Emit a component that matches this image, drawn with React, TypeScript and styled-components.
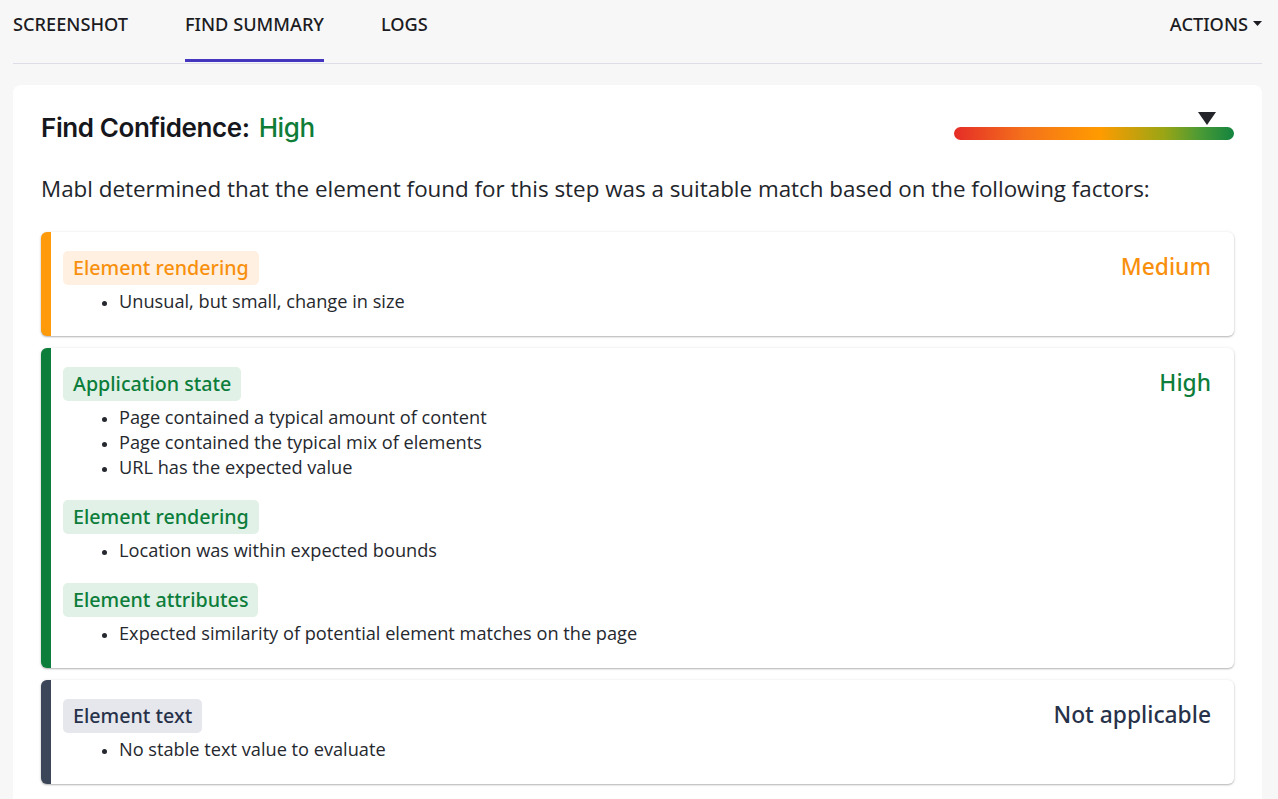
import React from "react";
import styled, { createGlobalStyle } from "styled-components";

const Global = createGlobalStyle`
  html, body { margin: 0; padding: 0; background: #f7f7f8; }
  body { font-family: "Open Sans", "Noto Sans", sans-serif; color: #1f2430; }
  * { box-sizing: border-box; }
`;

const Page = styled.div`
  padding: 0 16px 0 13px;
  min-height: 799px;
  overflow: hidden;
`;

const TabBar = styled.div`
  display: flex;
  align-items: stretch;
  height: 64px;
  border-bottom: 1px solid #dedee8;
`;

const Tabs = styled.div`
  display: flex;
  gap: 57px;
  flex: 1;
`;

const Tab = styled.div<{ $active?: boolean }>`
  font-family: "Noto Sans", "Open Sans", sans-serif;
  font-size: 18.2px;
  font-weight: 500;
  color: #1c1c22;
  padding-top: 12px;
  line-height: 24px;
  border-bottom: 3px solid ${(p) => (p.$active ? "#4536c0" : "transparent")};
  margin-bottom: 1px;
  height: 62px;
`;

const Actions = styled.div`
  display: flex;
  align-items: flex-start;
  gap: 5px;
  padding-top: 12px;
  line-height: 24px;
  font-family: "Noto Sans", "Open Sans", sans-serif;
  font-size: 18.2px;
  font-weight: 500;
  color: #1c1c22;
  svg { margin-top: 9px; }
`;

const Panel = styled.div`
  margin-top: 21px;
  background: #ffffff;
  border-radius: 8px 8px 0 0;
  padding: 25px 28px 40px 28px;
`;

const HeaderRow = styled.div`
  display: flex;
  align-items: center;
  justify-content: space-between;
`;

const Heading = styled.h2`
  margin: 0;
  font-family: Inter, sans-serif;
  font-size: 26px;
  font-weight: 600;
  letter-spacing: -0.4px;
  color: #15171c;
  line-height: 36px;
  span {
    color: #0f7d38;
    font-weight: 500;
    margin-left: 9px;
  }
`;

const Meter = styled.div`
  position: relative;
  width: 280px;
  height: 30px;
  margin-top: -2px;
`;

const MeterBar = styled.div`
  position: absolute;
  left: 0;
  right: 0;
  bottom: 2px;
  height: 13px;
  border-radius: 7px;
  background: linear-gradient(to right, #e52d27 0%, #f4711b 25%, #ff9b00 52%, #9aa515 75%, #4a9a35 88%, #13843f 100%);
`;

const MeterMark = styled.svg`
  position: absolute;
  left: 244px;
  top: 0;
`;

const Description = styled.p`
  margin: 28px 0 28px;
  font-size: 22.4px;
  line-height: 30px;
  color: #22252b;
`;

const Cards = styled.div`
  display: flex;
  flex-direction: column;
  gap: 12px;
`;

type Tone = "orange" | "green" | "slate";

const tones: Record<Tone, { bar: string; text: string; bg: string }> = {
  orange: { bar: "#ff9a0a", text: "#f8900e", bg: "#fff0e1" },
  green: { bar: "#0c7d3a", text: "#0c7d3a", bg: "#e1f1e7" },
  slate: { bar: "#3c4659", text: "#27324a", bg: "#e6e7ec" },
};

const Card = styled.div<{ $tone: Tone }>`
  display: flex;
  justify-content: space-between;
  align-items: flex-start;
  background: #fff;
  border-left: 10px solid ${(p) => tones[p.$tone].bar};
  border-radius: 6px;
  box-shadow: 0 1px 2px rgba(0, 0, 0, 0.28), 0 0 4px rgba(0, 0, 0, 0.06);
  padding: 19px 23px 22px 12px;
`;

const Factors = styled.div`
  display: flex;
  flex-direction: column;
  gap: 20px;
`;

const Factor = styled.div``;

const Tag = styled.span<{ $tone: Tone }>`
  display: inline-block;
  height: 34px;
  line-height: 34px;
  padding: 0 10px;
  border-radius: 5px;
  font-family: "Noto Sans", "Open Sans", sans-serif;
  font-size: 19.7px;
  font-weight: 500;
  background: ${(p) => tones[p.$tone].bg};
  color: ${(p) => tones[p.$tone].text};
`;

const List = styled.ul`
  margin: 4px 0 0;
  padding-left: 56px;
  font-size: 18.2px;
  line-height: 25px;
  color: #25282e;
  li::marker { font-size: 15px; }
`;

const Level = styled.div<{ $tone: Tone }>`
  font-family: "Noto Sans", "Open Sans", sans-serif;
  font-size: 22.8px;
  line-height: 32px;
  font-weight: 500;
  color: ${(p) => tones[p.$tone].text};
`;

type FactorData = { tag: string; items: string[] };
type CardData = { tone: Tone; level: string; factors: FactorData[] };

const cards: CardData[] = [
  {
    tone: "orange",
    level: "Medium",
    factors: [{ tag: "Element rendering", items: ["Unusual, but small, change in size"] }],
  },
  {
    tone: "green",
    level: "High",
    factors: [
      {
        tag: "Application state",
        items: [
          "Page contained a typical amount of content",
          "Page contained the typical mix of elements",
          "URL has the expected value",
        ],
      },
      { tag: "Element rendering", items: ["Location was within expected bounds"] },
      { tag: "Element attributes", items: ["Expected similarity of potential element matches on the page"] },
    ],
  },
  {
    tone: "slate",
    level: "Not applicable",
    factors: [{ tag: "Element text", items: ["No stable text value to evaluate"] }],
  },
];

export default function App() {
  return (
    <>
      <Global />
      <Page>
        <TabBar>
          <Tabs>
            <Tab>SCREENSHOT</Tab>
            <Tab $active>FIND SUMMARY</Tab>
            <Tab>LOGS</Tab>
          </Tabs>
          <Actions>
            ACTIONS
            <svg width="9" height="5" viewBox="0 0 9 5">
              <path d="M0 0h9L4.5 5z" fill="#1c1c22" />
            </svg>
          </Actions>
        </TabBar>
        <Panel>
          <HeaderRow>
            <Heading>
              Find Confidence:<span>High</span>
            </Heading>
            <Meter>
              <MeterBar />
              <MeterMark width="18" height="13" viewBox="0 0 18 13">
                <path d="M0 0h18L9 13z" fill="#23252b" />
              </MeterMark>
            </Meter>
          </HeaderRow>
          <Description>
            Mabl determined that the element found for this step was a suitable match based on the following factors:
          </Description>
          <Cards>
            {cards.map((c, i) => (
              <Card key={i} $tone={c.tone}>
                <Factors>
                  {c.factors.map((f, j) => (
                    <Factor key={j}>
                      <Tag $tone={c.tone}>{f.tag}</Tag>
                      <List>
                        {f.items.map((it, k) => (
                          <li key={k}>{it}</li>
                        ))}
                      </List>
                    </Factor>
                  ))}
                </Factors>
                <Level $tone={c.tone}>{c.level}</Level>
              </Card>
            ))}
          </Cards>
        </Panel>
      </Page>
    </>
  );
}
